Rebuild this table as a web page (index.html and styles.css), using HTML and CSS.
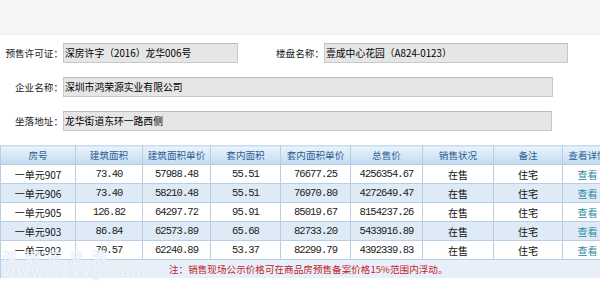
FILE: index.html
```html
<!DOCTYPE html>
<html lang="zh-CN">
<head>
<meta charset="utf-8">
<link rel="stylesheet" href="styles.css">
</head>
<body>
<div class="page">
  <div class="topbar"></div>
  <div class="form">
    <div class="frow">
      <span class="label">预售许可证：</span>
      <span class="field f1">深房许字（2016）龙华006号</span>
      <span class="label label2">楼盘名称：</span>
      <span class="field f2">壹成中心花园（A824-0123）</span>
    </div>
    <div class="frow">
      <span class="label">企业名称：</span>
      <span class="field f3">深圳市鸿荣源实业有限公司</span>
    </div>
    <div class="frow">
      <span class="label">坐落地址：</span>
      <span class="field f4">龙华街道东环一路西侧</span>
    </div>
  </div>
  <div class="tablewrap">
    <table class="grid">
      <colgroup>
        <col class="c1"><col class="c2"><col class="c3"><col class="c4"><col class="c5"><col class="c6"><col class="c7"><col class="c8"><col class="c9">
      </colgroup>
      <thead>
        <tr><th>房号</th><th>建筑面积</th><th>建筑面积单价</th><th>套内面积</th><th>套内面积单价</th><th>总售价</th><th>销售状况</th><th>备注</th><th>查看详情</th></tr>
      </thead>
      <tbody>
        <tr><td class="room">一单元907</td><td class="num">73.40</td><td class="num">57988.48</td><td class="num">55.51</td><td class="num">76677.25</td><td class="num">4256354.67</td><td>在售</td><td>住宅</td><td class="link">查看</td></tr>
        <tr class="alt"><td class="room">一单元906</td><td class="num">73.40</td><td class="num">58210.48</td><td class="num">55.51</td><td class="num">76970.80</td><td class="num">4272649.47</td><td>在售</td><td>住宅</td><td class="link">查看</td></tr>
        <tr><td class="room">一单元905</td><td class="num">126.82</td><td class="num">64297.72</td><td class="num">95.91</td><td class="num">85019.67</td><td class="num">8154237.26</td><td>在售</td><td>住宅</td><td class="link">查看</td></tr>
        <tr class="alt"><td class="room">一单元903</td><td class="num">86.84</td><td class="num">62573.89</td><td class="num">65.68</td><td class="num">82733.20</td><td class="num">5433916.89</td><td>在售</td><td>住宅</td><td class="link">查看</td></tr>
        <tr><td class="room">一单元902</td><td class="num">70.57</td><td class="num">62240.89</td><td class="num">53.37</td><td class="num">82299.79</td><td class="num">4392339.83</td><td>在售</td><td>住宅</td><td class="link">查看</td></tr>
        <tr class="note"><td colspan="9"><span class="notetext">注：销售现场公示价格可在商品房预售备案价格15%范围内浮动。</span></td></tr>
      </tbody>
    </table>
    <div class="watermark">
      <div class="wm1">深 圳 信 息 港</div>
      <div class="wm2">www.szxxg.com</div>
    </div>
  </div>
</div>
</body>
</html>
```

FILE: styles.css
```css
* { box-sizing: border-box; }
html, body { margin: 0; padding: 0; background: #fff; }
body {
  width: 600px;
  height: 282px;
  overflow: hidden;
  font-family: "Noto Sans CJK SC", "Noto Sans", sans-serif;
  font-size: 10px;
  color: #111;
}
.page { width: 600px; }
.topbar {
  height: 35px;
  background: #f5f5f5;
  border-bottom: 1px solid #ededed;
}
.form {
  padding-top: 8px;
  display: flex;
  flex-direction: column;
  gap: 14px;
}
.frow {
  display: flex;
  align-items: center;
  height: 20px;
}
.label {
  width: 63px;
  text-align: right;
  font-size: 9.6px;
  color: #222;
  white-space: nowrap;
}
.label2 { width: 86px; }
.field {
  height: 20px;
  line-height: 18px;
  background: #e6e6e6;
  border: 1px solid #c9c9c9;
  border-top-color: #bdbdbd;
  padding-left: 1px;
  font-size: 9.8px;
  color: #000;
  white-space: nowrap;
}
.f1 { width: 175px; }
.f2 { width: 244px; }
.f3 { width: 490px; }
.f4 { width: 489px; }
.tablewrap {
  position: relative;
  margin-top: 14px;
  width: 600px;
  overflow: hidden;
  height: 138px;
}
.grid {
  border-collapse: collapse;
  table-layout: fixed;
  width: 612px;
}
.c1 { width: 75px; }
.c2 { width: 67px; }
.c3 { width: 68px; }
.c4 { width: 70px; }
.c5 { width: 70px; }
.c6 { width: 72px; }
.c7 { width: 71px; }
.c8 { width: 69px; }
.c9 { width: 50px; }
.grid th {
  height: 19px;
  padding: 0;
  font-weight: normal;
  font-size: 9.6px;
  color: #2a5f94;
  background: linear-gradient(#eaf3fb, #c3dbf1);
  border: 1px solid #b6cde6;
  border-top-color: #c9dbee;
  white-space: nowrap;
  overflow: hidden;
}
.grid td {
  height: 19px;
  padding: 0;
  text-align: center;
  border: 1px solid #b9cfe6;
  font-size: 10px;
  color: #111;
  white-space: nowrap;
  overflow: hidden;
}
.grid tr.alt td { background: #dfeaf7; }
.grid td.num {
  font-family: "Liberation Mono", "DejaVu Sans Mono", monospace;
  font-size: 10.5px;
  letter-spacing: -0.9px;
  color: #222;
}
.grid td.room { font-size: 10px; color: #111; }
.grid td.link { color: #2f8a9e; }
.grid tr.note td {
  background: #e7f0f9;
  height: 18px;
  text-align: left;
  border-bottom: none;
}
.notetext {
  display: inline-block;
  margin-left: 168px;
  color: #c4242c;
  font-size: 9.6px;
}
.watermark {
  position: absolute;
  left: 2px;
  top: 104px;
  color: rgba(255, 255, 255, 0.75);
  font-family: "DejaVu Sans", sans-serif;
  font-weight: bold;
  text-shadow: 0 0 1px rgba(160, 190, 220, 0.6);
  line-height: 1;
}
.wm1 { font-size: 15px; letter-spacing: 2px; font-family: "Noto Sans CJK SC", sans-serif; }
.wm2 { font-size: 14px; letter-spacing: 1.5px; margin-top: 1px; }
```
